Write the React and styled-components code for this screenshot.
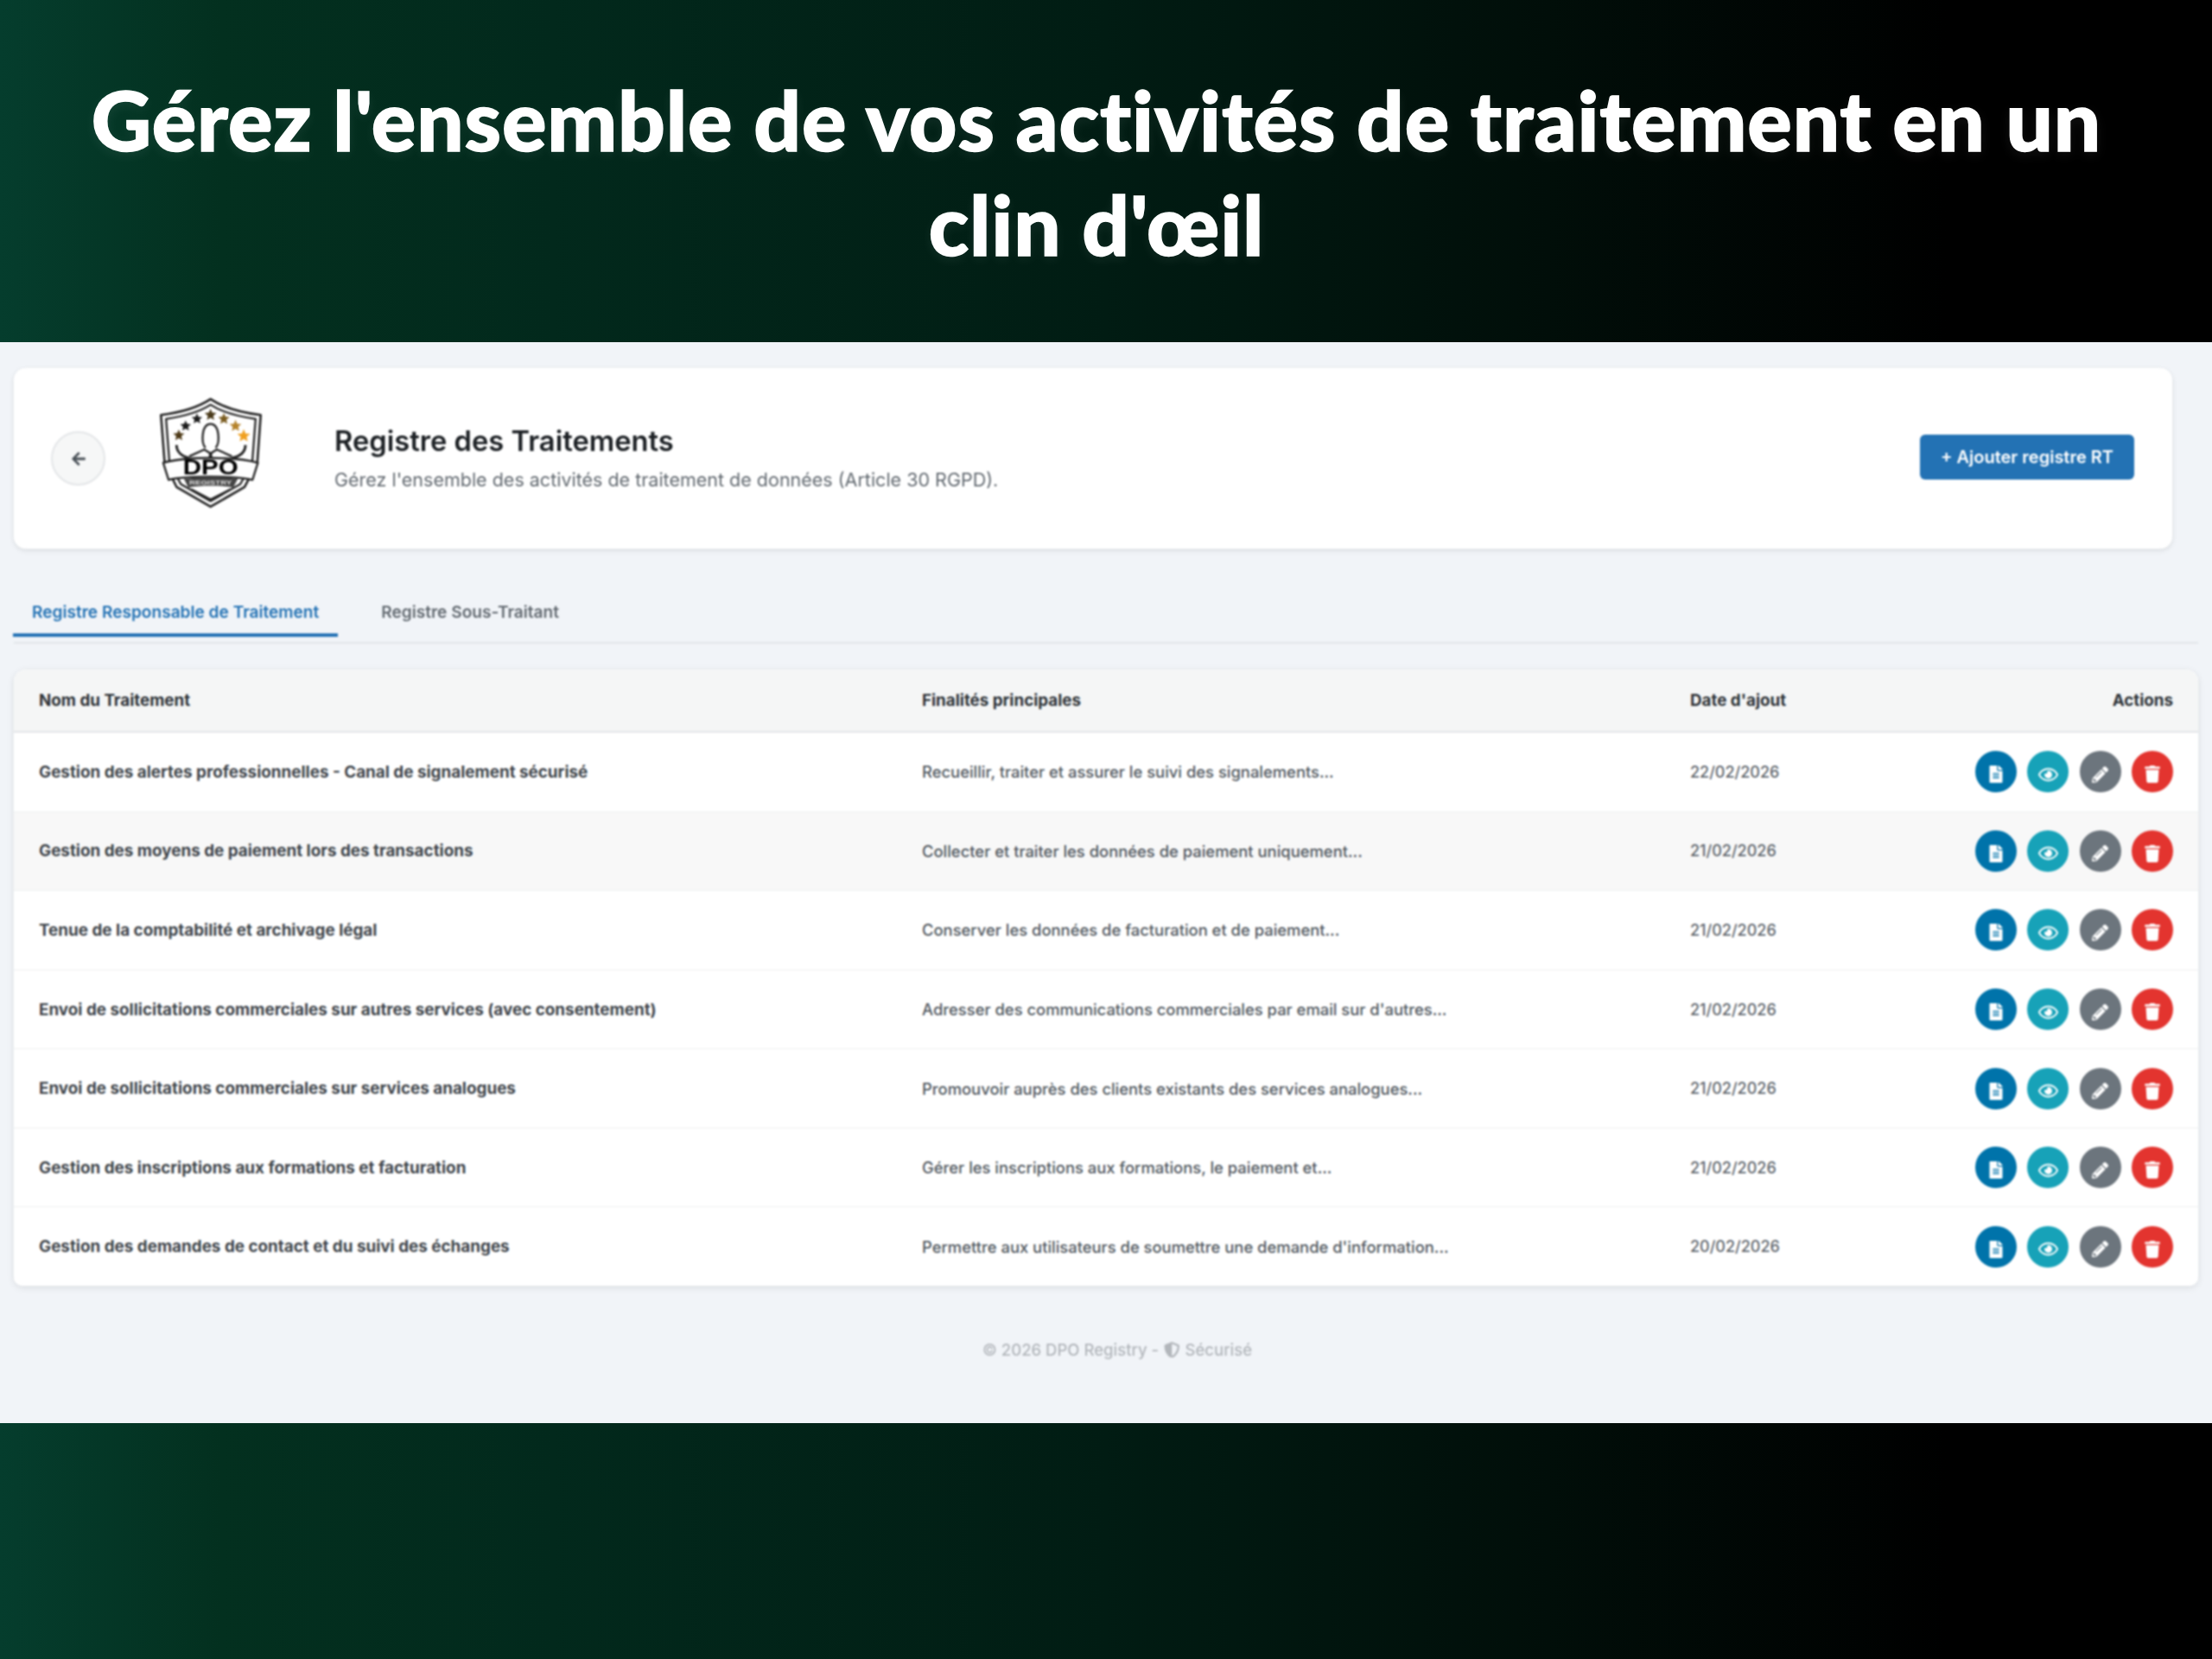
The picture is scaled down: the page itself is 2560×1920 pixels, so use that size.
import React from 'react'
import styled, { createGlobalStyle } from 'styled-components'
import { FaArrowLeft, FaFileAlt, FaPencilAlt, FaRegEye, FaShieldAlt, FaTrash } from 'react-icons/fa'

const GlobalStyle = createGlobalStyle`
  html, body {
    margin: 0;
    padding: 0;
    background: #000;
  }
  * {
    box-sizing: border-box;
  }
`

const rows = [
  ['Gestion des alertes professionnelles - Canal de signalement sécurisé', 'Recueillir, traiter et assurer le suivi des signalements...', '22/02/2026'],
  ['Gestion des moyens de paiement lors des transactions', 'Collecter et traiter les données de paiement uniquement...', '21/02/2026'],
  ['Tenue de la comptabilité et archivage légal', 'Conserver les données de facturation et de paiement...', '21/02/2026'],
  ['Envoi de sollicitations commerciales sur autres services (avec consentement)', 'Adresser des communications commerciales par email sur d\'autres...', '21/02/2026'],
  ['Envoi de sollicitations commerciales sur services analogues', 'Promouvoir auprès des clients existants des services analogues...', '21/02/2026'],
  ['Gestion des inscriptions aux formations et facturation', 'Gérer les inscriptions aux formations, le paiement et...', '21/02/2026'],
  ['Gestion des demandes de contact et du suivi des échanges', 'Permettre aux utilisateurs de soumettre une demande d\'information...', '20/02/2026'],
]

const starPoints = (cx, cy, r) => {
  const pts = []
  for (let i = 0; i < 10; i++) {
    const rad = i % 2 === 0 ? r : r * 0.45
    const a = -Math.PI / 2 + (i * Math.PI) / 5
    pts.push(`${(cx + rad * Math.cos(a)).toFixed(1)},${(cy + rad * Math.sin(a)).toFixed(1)}`)
  }
  return pts.join(' ')
}

const stars = [
  [168, 188, 21, '#4e3a18'],
  [192, 155, 20, '#1b1b1b'],
  [232, 130, 20, '#1b1b1b'],
  [280, 116, 22, '#4a3a1a'],
  [327, 130, 21, '#7a5c20'],
  [368, 155, 22, '#b5832b'],
  [397, 190, 24, '#f0a020'],
]

const Logo = () => (
  <LogoSvg viewBox="95 52 372 395">
    <path d="M280 60 C235 90 170 108 105 116 L118 285 L160 370 L280 440 L400 370 L445 285 L457 116 C392 108 325 90 280 60 Z" fill="#fff" stroke="#222" strokeWidth="8" strokeLinejoin="round" />
    <path d="M280 80 C240 106 180 122 123 130 L135 285 L175 360 L280 420 L385 360 L427 285 L439 130 C382 122 320 106 280 80 Z" fill="#fff" stroke="#222" strokeWidth="7" strokeLinejoin="round" />
    {stars.map(([x, y, r, c]) => (
      <polygon key={x} points={starPoints(x, y, r)} fill={c} />
    ))}
    <path d="M262 232 C246 214 248 148 280 148 C312 148 314 214 298 232" fill="#fff" stroke="#222" strokeWidth="7" />
    <path d="M205 262 L258 238 L280 252 L302 238 L355 262" fill="none" stroke="#222" strokeWidth="7" />
    <path d="M275 250 L285 250 L288 282 L272 282 Z" fill="#222" />
    <path d="M160 222 C160 246 178 262 205 268 M403 222 C403 246 384 262 355 268" fill="none" stroke="#222" strokeWidth="9" />
    <path d="M113 285 C190 262 370 262 447 285 L428 345 C370 330 190 330 132 345 Z" fill="#fff" stroke="#222" strokeWidth="7" strokeLinejoin="round" />
    <text x="280" y="327" textAnchor="middle" textLength="195" lengthAdjust="spacingAndGlyphs" fontFamily="'Liberation Sans', sans-serif" fontWeight="700" fontSize="72" fill="#000">DPO</text>
    <path d="M186 342 C240 332 320 332 376 342 L360 372 C320 364 240 364 202 372 Z" fill="#444" />
    <text x="280" y="362" textAnchor="middle" textLength="150" lengthAdjust="spacingAndGlyphs" fontFamily="'Liberation Sans', sans-serif" fontWeight="700" fontSize="23" fill="#ddd">REGISTRY</text>
    <path d="M212 378 L280 414 L350 378" fill="none" stroke="#222" strokeWidth="6" />
  </LogoSvg>
)

const App = () => (
  <Poster>
    <GlobalStyle />
    <Banner>
      <Headline>Gérez l'ensemble de vos activités de traitement en un<br />clin d'œil</Headline>
    </Banner>
    <Screen>
      <ScreenContent>
        <TopCard>
          <BackButton><FaArrowLeft /></BackButton>
          <Logo />
          <TitleBlock>
            <PageTitle>Registre des Traitements</PageTitle>
            <PageSubtitle>Gérez l'ensemble des activités de traitement de données (Article 30 RGPD).</PageSubtitle>
          </TitleBlock>
          <AddButton>+ Ajouter registre RT</AddButton>
        </TopCard>
        <Tabs>
          <Tab $active>Registre Responsable de Traitement</Tab>
          <Tab>Registre Sous-Traitant</Tab>
        </Tabs>
        <TableCard>
          <HeadRow>
            <span>Nom du Traitement</span>
            <span>Finalités principales</span>
            <span>Date d'ajout</span>
            <ActionsHead>Actions</ActionsHead>
          </HeadRow>
          {rows.map(([name, goal, date], i) => (
            <Row key={name} $hovered={i === 1}>
              <NameCell>{name}</NameCell>
              <GoalCell>{goal}</GoalCell>
              <DateCell>{date}</DateCell>
              <Actions>
                <RoundButton $bg="#0073aa" $size="20px"><FaFileAlt /></RoundButton>
                <RoundButton $bg="#17a2b8" $size="23px"><FaRegEye /></RoundButton>
                <RoundButton $bg="#6c757d" $size="19px"><FaPencilAlt /></RoundButton>
                <RoundButton $bg="#e3342f" $size="20px"><FaTrash /></RoundButton>
              </Actions>
            </Row>
          ))}
        </TableCard>
        <FooterNote>© 2026 DPO Registry - <FaShieldAlt /> Sécurisé</FooterNote>
      </ScreenContent>
    </Screen>
    <BottomBand />
  </Poster>
)

const Poster = styled.div`
  width: 2560px;
  height: 1920px;
  display: flex;
  flex-direction: column;
  overflow: hidden;
`

const bandGradient = 'linear-gradient(90deg, #053d2d 0%, #03301f 10%, #02291c 25%, #011c13 50%, #010e09 70%, #000 88%)'

const Banner = styled.header`
  height: 396px;
  display: flex;
  align-items: center;
  justify-content: center;
  padding: 0 82px 0 60px;
  background: ${bandGradient};
`

const Headline = styled.h1`
  margin: 0;
  font-family: Lato, 'Open Sans', sans-serif;
  font-size: 96px;
  font-weight: 900;
  letter-spacing: 0.9px;
  line-height: 121px;
  text-align: center;
  color: #fff;
  -webkit-text-stroke: 1.5px #fff;
  text-shadow: 0 4px 14px rgba(255, 255, 255, 0.08);
`

const Screen = styled.main`
  height: 1251px;
  padding: 30px 16px 0;
  background: #f1f4f8;
  font-family: Inter, 'Liberation Sans', sans-serif;
`

const ScreenContent = styled.div`
  display: flex;
  flex-direction: column;
  filter: blur(0.85px);
`

const TopCard = styled.section`
  width: 2498px;
  height: 209px;
  display: flex;
  align-items: center;
  padding: 0 44px 0 43px;
  background: #fff;
  border-radius: 14px;
  box-shadow: 0 2px 6px rgba(0, 0, 0, 0.1);
`

const BackButton = styled.button`
  width: 63px;
  height: 63px;
  display: flex;
  align-items: center;
  justify-content: center;
  flex: none;
  padding: 0;
  color: #495057;
  font-size: 18px;
  background: #f6f7f7;
  border: 2px solid #e4e6e8;
  border-radius: 50%;
`

const LogoSvg = styled.svg`
  width: 122px;
  height: 130px;
  flex: none;
  margin: 0 82px 14px 61px;
`

const TitleBlock = styled.div`
  flex: 1;
  display: flex;
  flex-direction: column;
  gap: 12px;
  margin-bottom: 3px;
`

const PageTitle = styled.h2`
  margin: 0;
  color: #1c2024;
  font-size: 32.7px;
  font-weight: 600;
  line-height: 40px;
`

const PageSubtitle = styled.p`
  margin: 0;
  color: #636a71;
  font-size: 21.5px;
  line-height: 26px;
`

const AddButton = styled.button`
  width: 248px;
  height: 52px;
  margin-bottom: 3px;
  padding: 0;
  color: #fff;
  font-family: inherit;
  font-size: 20px;
  font-weight: 600;
  background: #2372b4;
  border: none;
  border-radius: 6px;
`

const Tabs = styled.nav`
  display: flex;
  margin-top: 55px;
  height: 55px;
  border-bottom: 2px solid #e3e6e9;
`

const Tab = styled.div`
  height: 47px;
  display: flex;
  align-items: center;
  padding: 0 22px 7px;
  margin-right: 28px;
  margin-left: ${({ $active }) => ($active ? '-1px' : '0')};
  color: ${({ $active }) => ($active ? '#2372b4' : '#636a71')};
  font-size: 19.1px;
  font-weight: 600;
  border-bottom: 4px solid ${({ $active }) => ($active ? '#2372b4' : 'transparent')};
`

const TableCard = styled.section`
  margin-top: 30px;
  height: 713px;
  display: flex;
  flex-direction: column;
  overflow: hidden;
  background: #fff;
  border-radius: 14px 14px 10px 10px;
  box-shadow: 0 2px 8px rgba(0, 0, 0, 0.1);
`

const tableColumns = `
  display: grid;
  grid-template-columns: 1022px 889px 1fr auto;
  align-items: center;
  padding: 0 29px;
`

const HeadRow = styled.div`
  ${tableColumns}
  flex: none;
  height: 73px;
  color: #2e3338;
  font-size: 18.8px;
  font-weight: 700;
  background: #f5f6f6;
  border-bottom: 2px solid #e3e5e8;
`

const ActionsHead = styled.span`
  text-align: right;
`

const Row = styled.div`
  ${tableColumns}
  flex: 1;
  font-size: 18px;
  background: ${({ $hovered }) => ($hovered ? '#f8f8f8' : '#fff')};
  border-bottom: 1px solid #eef0f1;
  &:last-child {
    border-bottom: none;
  }
`

const NameCell = styled.span`
  color: #3f454b;
  font-size: 18.85px;
  font-weight: 700;
`

const GoalCell = styled.span`
  color: #50575e;
  font-size: 18.4px;
  font-weight: 500;
`

const DateCell = styled.span`
  color: #5f666d;
  font-weight: 500;
`

const Actions = styled.div`
  display: flex;
  justify-content: flex-end;
  gap: 12.5px;
`

const RoundButton = styled.button`
  width: 48px;
  height: 48px;
  display: flex;
  align-items: center;
  justify-content: center;
  padding: 6px 0 0;
  color: #fff;
  font-size: ${({ $size }) => $size};
  background: ${({ $bg }) => $bg};
  border: none;
  border-radius: 50%;
`

const FooterNote = styled.footer`
  display: flex;
  align-items: center;
  justify-content: center;
  gap: 6px;
  margin-top: 62px;
  padding-left: 26px;
  color: #b2b6bb;
  font-size: 18.5px;
  font-weight: 500;
  line-height: 24px;
`

const BottomBand = styled.div`
  flex: 1;
  background: ${bandGradient};
`

export default App
